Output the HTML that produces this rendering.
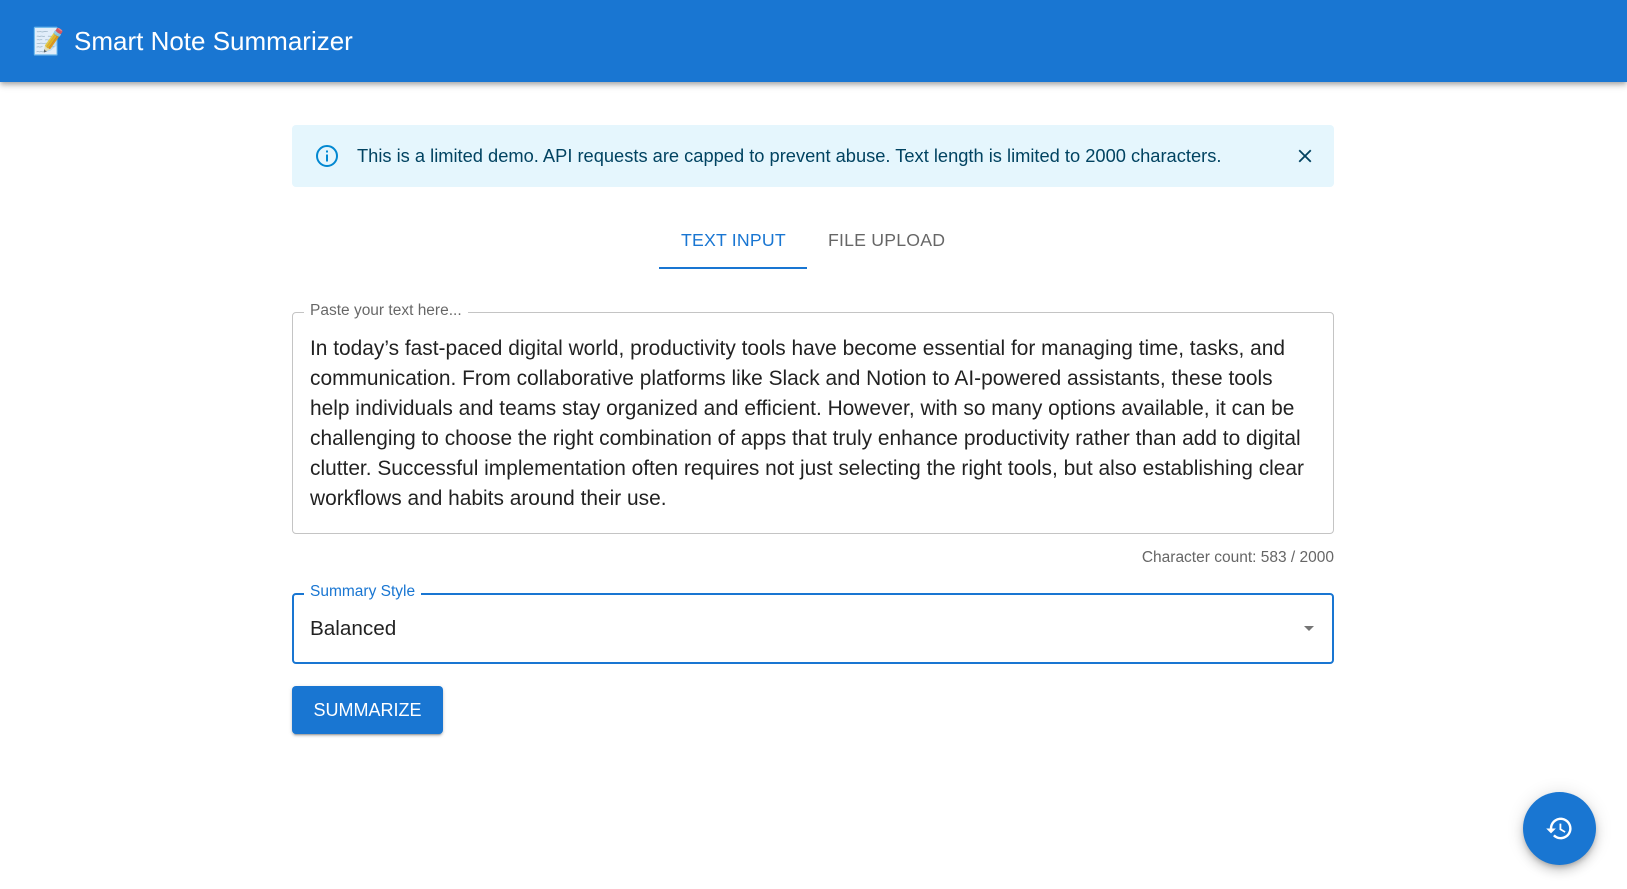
<!DOCTYPE html>
<html><head><meta charset="utf-8">
<style>
*{box-sizing:border-box;margin:0;padding:0}
body{width:1627px;height:889px;overflow:hidden;background:#fff;font-family:"Liberation Sans",Arial,sans-serif;position:relative;color:rgba(0,0,0,.87)}
.hdr{position:absolute;left:0;top:0;width:1627px;height:82px;background:#1976d2;box-shadow:0 2px 4px -1px rgba(0,0,0,.2),0 4px 5px 0 rgba(0,0,0,.14),0 1px 10px 0 rgba(0,0,0,.12)}
.hdr .ic{position:absolute;left:32px;top:26px;font-size:26px;line-height:30px}
.hdr .t{position:absolute;left:74px;top:24px;font-size:26px;line-height:34px;color:#fff}
.alert{position:absolute;left:292px;top:125px;width:1042px;height:62px;background:#e5f6fd;border-radius:4px;color:#014361;font-size:18.3px}
.alert .tx{position:absolute;left:65px;top:20px;line-height:21px}
.tab{position:absolute;top:229px;font-size:17.7px;line-height:22px;letter-spacing:.2px}
.ind{position:absolute;left:659px;top:267px;width:148px;height:2px;background:#1976d2}
.tf{position:absolute;left:292px;top:312px;width:1042px;height:222px;border:1px solid #c4c4c4;border-radius:4px}
.lbl{position:absolute;background:#fff;padding:0 6px;font-size:15.5px;line-height:18px}
.body{position:absolute;left:310px;top:334px;font-size:20.9px;line-height:30px;white-space:nowrap}
.cc{position:absolute;right:293px;top:549px;font-size:15.5px;color:#666;line-height:18px}
.sel{position:absolute;left:292px;top:593px;width:1042px;height:71px;border:2px solid #1976d2;border-radius:4px}
.btn{position:absolute;left:292px;top:686px;width:151px;height:48px;background:#1976d2;border-radius:4px;color:#fff;font-size:18px;line-height:48px;text-align:center;box-shadow:0 3px 1px -2px rgba(0,0,0,.2),0 2px 2px 0 rgba(0,0,0,.14),0 1px 5px 0 rgba(0,0,0,.12)}
.fab{position:absolute;left:1523px;top:792px;width:73px;height:73px;border-radius:50%;background:#1976d2;box-shadow:0 3px 5px -1px rgba(0,0,0,.2),0 6px 10px 0 rgba(0,0,0,.14),0 1px 18px 0 rgba(0,0,0,.12)}
</style></head><body>
<div class="hdr"><span class="ic">📝</span><span class="t">Smart Note Summarizer</span></div>
<div class="alert">
<svg style="position:absolute;left:23px;top:19px" width="24" height="24" viewBox="0 0 24 24"><circle cx="12" cy="12" r="10" fill="none" stroke="#0288d1" stroke-width="2"/><rect x="11" y="10.5" width="2" height="7" fill="#0288d1"/><rect x="11" y="6.5" width="2" height="2" fill="#0288d1"/></svg>
<span class="tx">This is a limited demo. API requests are capped to prevent abuse. Text length is limited to 2000 characters.</span>
<svg style="position:absolute;left:1002px;top:20px" width="22" height="22" viewBox="0 0 24 24"><path d="M19 6.41 17.59 5 12 10.59 6.41 5 5 6.41 10.59 12 5 17.59 6.41 19 12 13.41 17.59 19 19 17.59 13.41 12z" fill="#014361"/></svg>
</div>
<div class="tab" style="left:681px;color:#1976d2">TEXT INPUT</div>
<div class="tab" style="left:828px;color:rgba(0,0,0,.6)">FILE UPLOAD</div>
<div class="ind"></div>
<div class="tf"></div>
<div class="lbl" style="left:304px;top:302px;color:rgba(0,0,0,.6)">Paste your text here...</div>
<div class="body">In today’s fast-paced digital world, productivity tools have become essential for managing time, tasks, and<br>communication. From collaborative platforms like Slack and Notion to AI-powered assistants, these tools<br>help individuals and teams stay organized and efficient. However, with so many options available, it can be<br>challenging to choose the right combination of apps that truly enhance productivity rather than add to digital<br>clutter. Successful implementation often requires not just selecting the right tools, but also establishing clear<br>workflows and habits around their use.</div>
<div class="cc">Character count: 583 / 2000</div>
<div class="sel">
<div style="position:absolute;left:16px;top:21px;font-size:20.7px;line-height:26px">Balanced</div>
<svg style="position:absolute;left:1003px;top:21px" width="24" height="24" viewBox="0 0 24 24"><path d="M7 10l5 5 5-5z" fill="rgba(0,0,0,.54)"/></svg>
</div>
<div class="lbl" style="left:304px;top:583px;color:#1976d2">Summary Style</div>
<div class="btn">SUMMARIZE</div>
<div class="fab"><svg style="position:absolute;left:22px;top:22px" width="29" height="29" viewBox="0 0 24 24"><path fill="#fff" d="M13 3c-4.97 0-9 4.03-9 9H1l3.89 3.89.07.14L9 12H6c0-3.87 3.13-7 7-7s7 3.13 7 7-3.13 7-7 7c-1.93 0-3.68-.79-4.94-2.06l-1.42 1.42C8.27 19.99 10.51 21 13 21c4.97 0 9-4.03 9-9s-4.03-9-9-9zm-1 5v5l4.28 2.54.72-1.21-3.5-2.08V8H12z"/></svg></div>
</body></html>
